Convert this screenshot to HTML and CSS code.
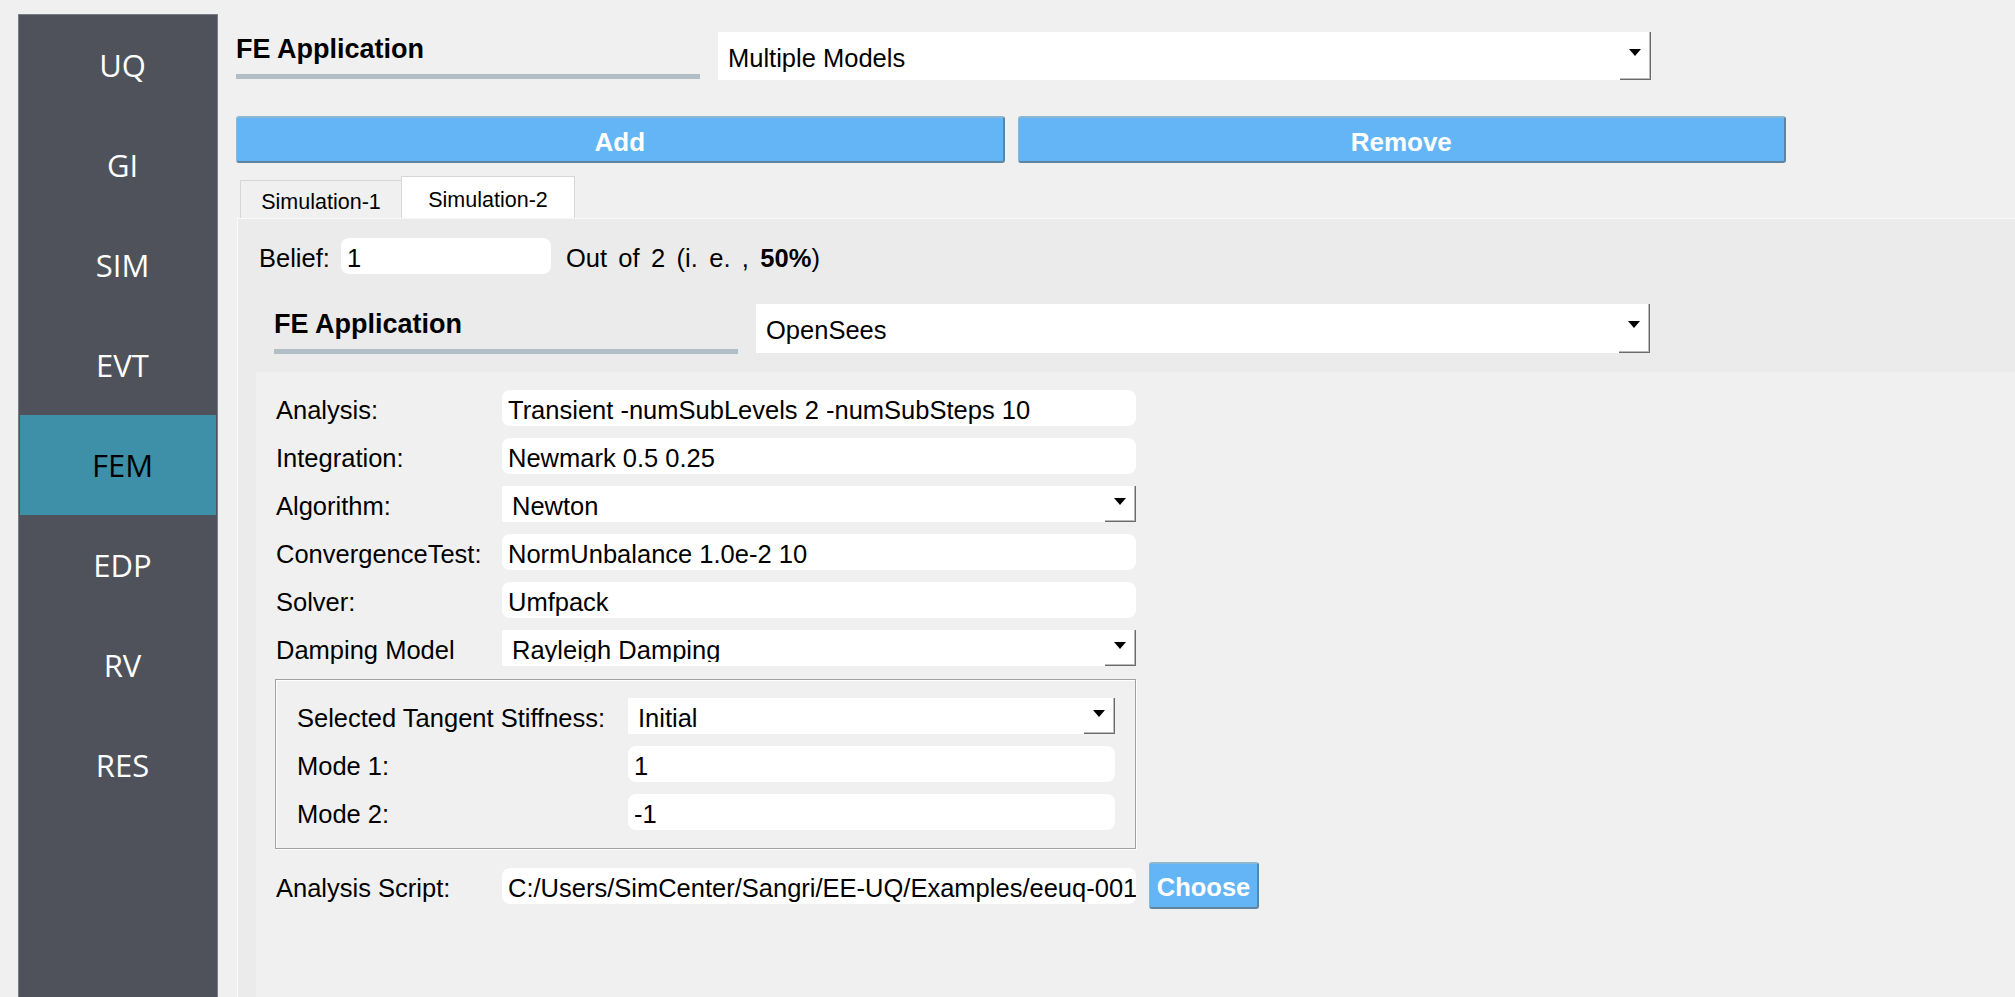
FILE: index.html
```html
<!DOCTYPE html>
<html lang="en">
<head>
<meta charset="utf-8">
<title>FE Application - Multiple Models</title>
<link rel="stylesheet" href="styles.css">
</head>
<body>
<div class="app">
  <nav class="sidebar">
    <div class="nav-item">UQ</div>
    <div class="nav-item">GI</div>
    <div class="nav-item">SIM</div>
    <div class="nav-item">EVT</div>
    <div class="nav-item active">FEM</div>
    <div class="nav-item">EDP</div>
    <div class="nav-item">RV</div>
    <div class="nav-item">RES</div>
  </nav>
  <main class="main">
    <div class="app-header">
      <div class="hdr-label">
        <div class="hdr-text">FE Application</div>
        <div class="hdr-bar"></div>
      </div>
      <div class="combo combo-lg combo-outer">
        <span class="combo-text">Multiple Models</span>
        <span class="combo-btn"><span class="tri"></span></span>
      </div>
    </div>
    <div class="btn-row">
      <button class="btn">Add</button>
      <button class="btn">Remove</button>
    </div>
    <div class="tabs">
      <div class="tab">Simulation-1</div>
      <div class="tab active">Simulation-2</div>
    </div>
    <div class="pane">
      <div class="belief-row">
        <span class="lbl">Belief:</span>
        <span class="edit belief-edit">1</span>
        <span class="lbl belief-out">Out of 2 (i. e. , <b>50%</b>)</span>
      </div>
      <div class="app-header inner-header">
        <div class="hdr-label inner-label">
          <div class="hdr-text">FE Application</div>
          <div class="hdr-bar"></div>
        </div>
        <div class="combo combo-lg combo-inner">
          <span class="combo-text">OpenSees</span>
          <span class="combo-btn"><span class="tri"></span></span>
        </div>
      </div>
      <div class="form-area">
        <div class="form-grid">
          <span class="lbl">Analysis:</span>
          <span class="edit">Transient -numSubLevels 2 -numSubSteps 10</span>
          <span class="lbl">Integration:</span>
          <span class="edit">Newmark 0.5 0.25</span>
          <span class="lbl">Algorithm:</span>
          <div class="combo combo-sm"><span class="combo-text">Newton</span><span class="combo-btn"><span class="tri"></span></span></div>
          <span class="lbl">ConvergenceTest:</span>
          <span class="edit">NormUnbalance 1.0e-2 10</span>
          <span class="lbl">Solver:</span>
          <span class="edit">Umfpack</span>
          <span class="lbl">Damping Model</span>
          <div class="combo combo-sm"><span class="combo-text clip">Rayleigh Damping</span><span class="combo-btn"><span class="tri"></span></span></div>
          <div class="group">
            <span class="lbl">Selected Tangent Stiffness:</span>
            <div class="combo combo-sm"><span class="combo-text">Initial</span><span class="combo-btn"><span class="tri"></span></span></div>
            <span class="lbl">Mode 1:</span>
            <span class="edit">1</span>
            <span class="lbl">Mode 2:</span>
            <span class="edit">-1</span>
          </div>
          <div class="script-row">
            <span class="lbl">Analysis Script:</span>
            <span class="edit path-edit">C:/Users/SimCenter/Sangri/EE-UQ/Examples/eeuq-001</span>
            <button class="btn choose">Choose</button>
          </div>
        </div>
      </div>
    </div>
  </main>
</div>
</body>
</html>
```

FILE: styles.css
```css
* { box-sizing: border-box; }
html, body {
  margin: 0;
  padding: 0;
  height: 100%;
  overflow: hidden;
}
body {
  background: #f0f0f0;
  font-family: "Liberation Sans", Arial, sans-serif;
  font-size: 25.5px;
  color: #000;
}
.app {
  display: flex;
  height: 100vh;
}

/* Sidebar */
.sidebar {
  flex: 0 0 200px;
  margin: 14px 0 0 18px;
  background: #4f525a;
  border: 1px solid #7a7d84;
  border-bottom: none;
  padding: 0 1px;
  display: flex;
  flex-direction: column;
}
.nav-item {
  height: 100px;
  line-height: 100px;
  padding-left: 9px;
  text-align: center;
  font-family: "Open Sans", "Noto Sans", sans-serif;
  font-size: 31px;
  color: #fff;
}
.nav-item.active {
  background: #3d90a7;
  color: #000;
}

/* Main column */
.main {
  flex: 1;
  margin-left: 18px;
  padding-top: 32px;
  display: flex;
  flex-direction: column;
  min-width: 0;
}
.app-header {
  display: flex;
  align-items: flex-start;
  gap: 18px;
}
.hdr-label {
  width: 464px;
  padding-top: 2px;
}
.hdr-text {
  font-weight: bold;
  font-size: 27px;
  line-height: 30px;
}
.hdr-bar {
  margin-top: 10px;
  height: 5px;
  background: #b1bec6;
}

/* Combo box */
.combo {
  display: flex;
  background: #fff;
}
.combo-text {
  flex: 1;
  line-height: 28px;
  white-space: nowrap;
  overflow: hidden;
}
.combo-btn {
  flex: 0 0 31px;
  border-right: 1px solid #6b6b6b;
  border-bottom: 1px solid #6b6b6b;
  box-shadow: inset -1px -1px 0 #b9b9b9;
  display: flex;
  justify-content: center;
}
.tri {
  width: 0;
  height: 0;
  border-left: 6px solid transparent;
  border-right: 6px solid transparent;
  border-top: 7px solid #000;
}
.combo-lg { height: 48px; }
.combo-lg .combo-text { padding: 12px 0 0 10px; }
.combo-lg .tri { margin-top: 17px; }
.combo-outer { width: 933px; }
.combo-inner { width: 894px; height: 49px; }

.combo-sm { height: 36px; }
.combo-sm .combo-text { padding: 6px 0 0 10px; height: 36px; }
.combo-sm .combo-text.clip { height: 32px; }
.combo-sm .tri { margin-top: 12px; }

/* Buttons */
.btn-row {
  margin-top: 36px;
  width: 1550px;
  display: flex;
  gap: 13px;
}
.btn {
  flex: 1;
  height: 47px;
  margin: 0;
  padding: 5px 0 0 0;
  background: #64b5f6;
  border-style: solid;
  border-width: 2px 2px 2px 1px;
  border-color: #8bb7d1 #5e84a0 #5e84a0 #8bb7d1;
  border-radius: 3px;
  color: #fff;
  font-family: "Liberation Sans", Arial, sans-serif;
  font-weight: bold;
  font-size: 26px;
}

/* Tabs */
.tabs {
  margin-top: 13px;
  margin-left: 4px;
  display: flex;
  align-items: flex-end;
}
.tab {
  height: 38px;
  width: 162px;
  border: 1px solid #d6d6d6;
  border-bottom: none;
  background: #f0f0f0;
  text-align: center;
  font-size: 21.5px;
  line-height: 24px;
  padding-top: 9px;
}
.tab.active {
  height: 42px;
  width: 174px;
  margin-left: -1px;
  background: #fff;
  padding-top: 11px;
}

/* Pane */
.pane {
  flex: 1;
  margin-left: 1px;
  background: #ebebeb;
  border-top: 1px solid #f9f9f9;
  border-left: 1px solid #f9f9f9;
  padding-top: 19px;
  display: flex;
  flex-direction: column;
}
.belief-row {
  display: flex;
  align-items: flex-start;
  height: 35px;
  margin-left: 21px;
}
.belief-edit {
  width: 210px;
  height: 35px;
  margin-left: 11px;
  padding-left: 5px;
}
.belief-out {
  margin-left: 15px;
  word-spacing: 4.3px;
}
.inner-header {
  margin-top: 31px;
  margin-left: 36px;
}
.inner-label { padding-top: 5px; }

/* Form */
.form-area {
  flex: 1;
  margin-top: 18px;
  margin-left: 18px;
  background: #f0f0f0;
  padding: 18px 0 0 20px;
}
.form-grid {
  display: grid;
  grid-template-columns: 226px 634px;
  align-items: start;
  row-gap: 12px;
}
.lbl {
  display: block;
  height: 36px;
  line-height: 28px;
  padding-top: 6px;
  white-space: nowrap;
}
.edit {
  display: block;
  background: #fff;
  border-radius: 8px;
  height: 36px;
  line-height: 28px;
  padding: 6px 0 0 6px;
  white-space: nowrap;
  overflow: hidden;
}
.group {
  grid-column: 1 / -1;
  margin: 1px 0 0 -1px;
  border: 1px solid #a0a0a0;
  box-shadow: inset 1px 1px 0 #fff, 1px 1px 0 #fff;
  padding: 18px 20px 18px 21px;
  display: grid;
  grid-template-columns: 331px 487px;
  row-gap: 12px;
}
.script-row {
  grid-column: 1 / -1;
  margin-top: 1px;
  display: flex;
  align-items: center;
  height: 47px;
  width: max-content;
}
.script-row > * { flex: none; }
.script-row .lbl { width: 226px; }
.path-edit {
  width: 634px;
  padding-right: 0;
}
.btn.choose {
  width: 110px;
  margin-left: 13px;
  height: 47px;
  padding-top: 4px;
  font-size: 25.5px;
}
```
